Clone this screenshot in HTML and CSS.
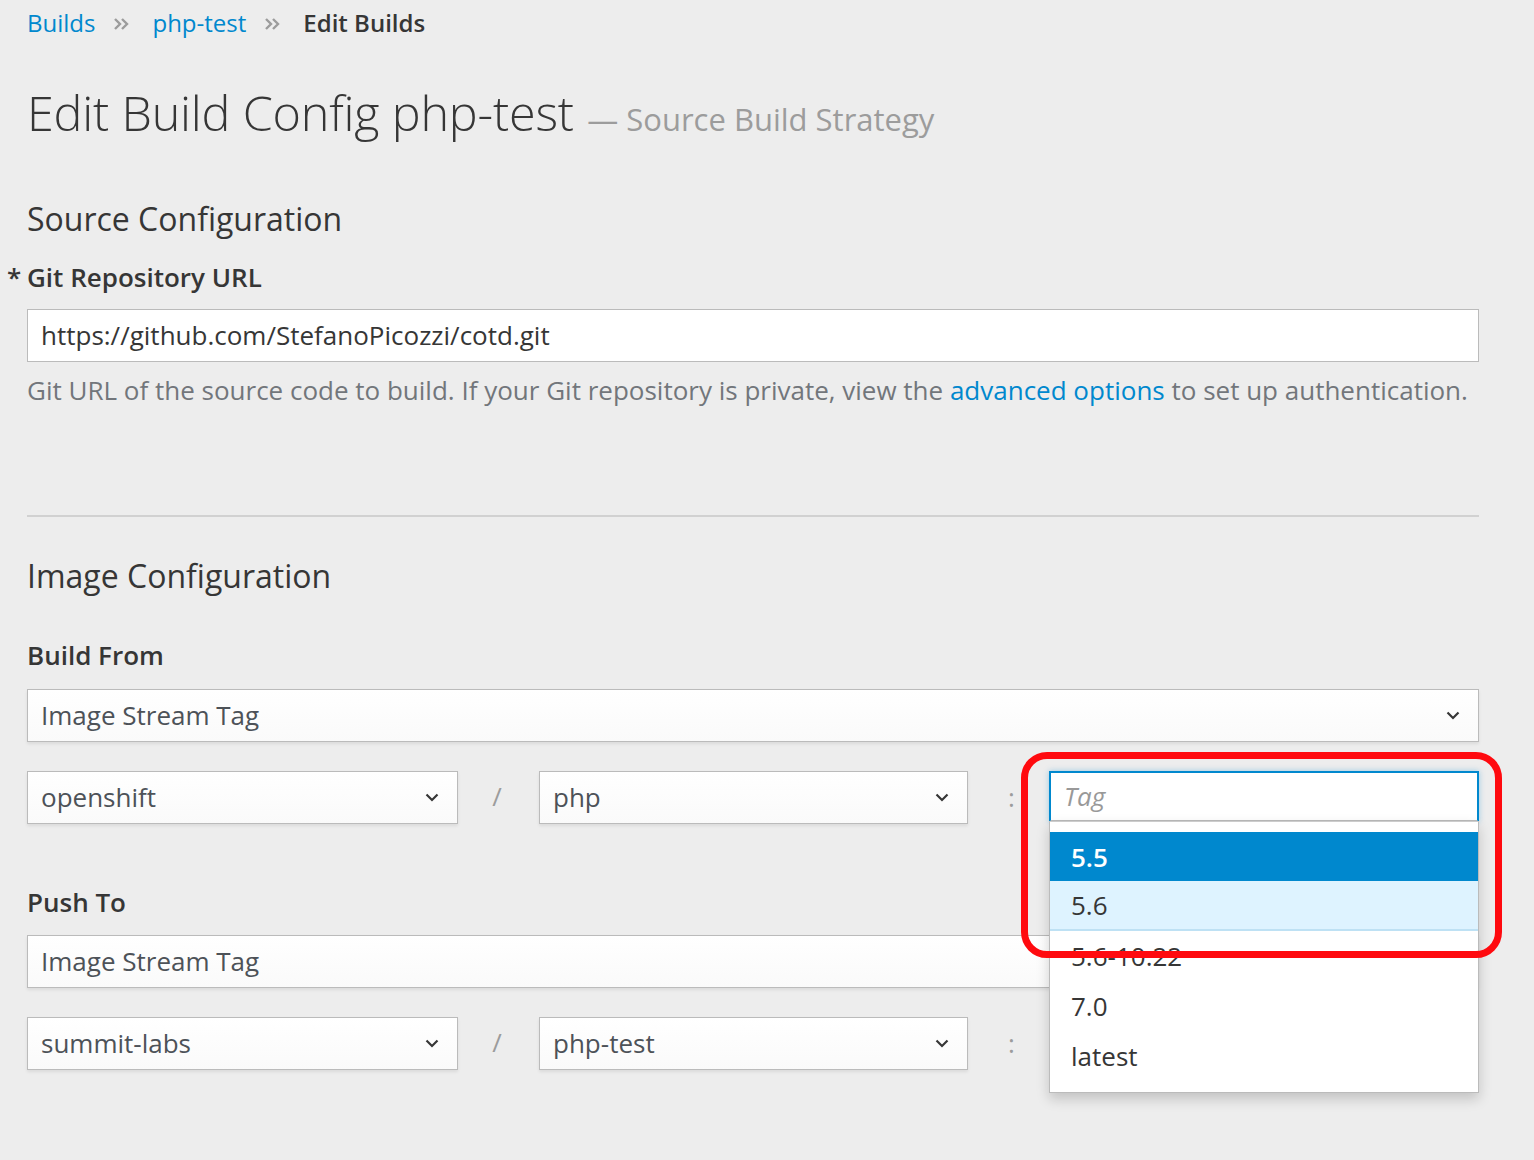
FILE: index.html
```html
<!DOCTYPE html>
<html lang="en">
<head>
<meta charset="utf-8">
<title>Edit Build Config php-test</title>
<link rel="stylesheet" href="styles.css">
</head>
<body>
<div class="page">
  <nav class="breadcrumb">
    <a href="#">Builds</a><span class="sep"><svg width="16" height="14" viewBox="0 0 16 14"><polyline points="2,2 7,7 2,12" fill="none" stroke="#9c9c9c" stroke-width="2.4"/><polyline points="9,2 14,7 9,12" fill="none" stroke="#9c9c9c" stroke-width="2.4"/></svg></span><a href="#">php-test</a><span class="sep"><svg width="16" height="14" viewBox="0 0 16 14"><polyline points="2,2 7,7 2,12" fill="none" stroke="#9c9c9c" stroke-width="2.4"/><polyline points="9,2 14,7 9,12" fill="none" stroke="#9c9c9c" stroke-width="2.4"/></svg></span><strong>Edit Builds</strong>
  </nav>

  <h1 class="title">Edit Build Config php-test <small>&mdash; Source Build Strategy</small></h1>

  <section class="section">
    <h2 class="section-title">Source Configuration</h2>
    <label class="label required"><span class="star">*</span>Git Repository URL</label>
    <div class="input">https://github.com/StefanoPicozzi/cotd.git</div>
    <p class="help">Git URL of the source code to build. If your Git repository is private, view the <a href="#">advanced options</a> to set up authentication.</p>
  </section>

  <hr class="divider">

  <section class="section">
    <h2 class="section-title img-title">Image Configuration</h2>

    <label class="label build-label">Build From</label>
    <div class="select"><span>Image Stream Tag</span><svg class="chev" width="14" height="9" viewBox="0 0 14 9"><polyline points="1.5,1.5 7,7 12.5,1.5" fill="none" stroke="#363636" stroke-width="2.2"/></svg></div>

    <div class="tag-row">
      <div class="select"><span>openshift</span><svg class="chev" width="14" height="9" viewBox="0 0 14 9"><polyline points="1.5,1.5 7,7 12.5,1.5" fill="none" stroke="#363636" stroke-width="2.2"/></svg></div>
      <div class="delim">/</div>
      <div class="select"><span>php</span><svg class="chev" width="14" height="9" viewBox="0 0 14 9"><polyline points="1.5,1.5 7,7 12.5,1.5" fill="none" stroke="#363636" stroke-width="2.2"/></svg></div>
      <div class="delim colon">:</div>
      <div class="tag-cell">
        <div class="input tag-input"><span class="placeholder">Tag</span></div>
        <ul class="menu">
          <li class="active">5.5</li>
          <li class="hover">5.6</li>
          <li>5.6-10.22</li>
          <li>7.0</li>
          <li>latest</li>
        </ul>
      </div>
    </div>

    <label class="label push-label">Push To</label>
    <div class="select"><span>Image Stream Tag</span><svg class="chev" width="14" height="9" viewBox="0 0 14 9"><polyline points="1.5,1.5 7,7 12.5,1.5" fill="none" stroke="#363636" stroke-width="2.2"/></svg></div>

    <div class="tag-row">
      <div class="select"><span>summit-labs</span><svg class="chev" width="14" height="9" viewBox="0 0 14 9"><polyline points="1.5,1.5 7,7 12.5,1.5" fill="none" stroke="#363636" stroke-width="2.2"/></svg></div>
      <div class="delim">/</div>
      <div class="select"><span>php-test</span><svg class="chev" width="14" height="9" viewBox="0 0 14 9"><polyline points="1.5,1.5 7,7 12.5,1.5" fill="none" stroke="#363636" stroke-width="2.2"/></svg></div>
      <div class="delim colon">:</div>
      <div class="tag-cell"></div>
    </div>
  </section>

  <div class="annotation"></div>
</div>
</body>
</html>
```

FILE: styles.css
```css
* { box-sizing: border-box; }
html, body { margin: 0; padding: 0; }
body {
  background: #ededed;
  font-family: "Open Sans", "Noto Sans", sans-serif;
  color: #363636;
  width: 1534px;
  height: 1160px;
  overflow: hidden;
}
a { color: #0088ce; text-decoration: none; }

.page {
  position: relative;
  padding: 0 55px 0 27px;
  width: 1534px;
}

.breadcrumb {
  font-size: 24px;
  line-height: 24px;
  padding-top: 11px;
  height: 35px;
  display: flex;
  align-items: center;
}
.breadcrumb .sep {
  display: inline-flex;
  align-items: center;
  margin: 0 23px 0 18px;
  height: 24px;
  padding-top: 2px;
}
.breadcrumb strong { font-weight: 600; color: #363636; }

.title {
  margin: 0;
  padding-top: 47px;
  font-size: 48.5px;
  line-height: 60px;
  font-weight: 300;
  color: #363636;
  letter-spacing: -0.2px;
}
.title small {
  font-size: 31px;
  color: #9c9c9c;
  font-weight: 400;
  margin-left: 1px;
  letter-spacing: 0;
}

.section-title {
  margin: 0;
  font-size: 32px;
  font-weight: 400;
  line-height: 40px;
  margin-top: 50px;
}
.label {
  display: block;
  font-weight: 600;
  font-size: 26px;
  line-height: 30px;
  margin-top: 23px;
  margin-bottom: 17px;
}
.label.required { margin-left: -20px; }
.star { display: inline-block; width: 20px; }

.input {
  height: 53px;
  border: 1px solid #bbbbbb;
  background: #fff;
  font-size: 26px;
  line-height: 51px;
  padding: 0 13px;
  color: #363636;
  width: 100%;
}
.help {
  margin: 11px 0 0;
  font-size: 26px;
  line-height: 34px;
  color: #72767b;
}

.divider {
  margin: 108px 0 0;
  border: 0;
  border-top: 2px solid #d1d1d1;
  width: 1452px;
}
.img-title { margin-top: 39px; }
.build-label { margin-top: 44px; margin-bottom: 19px; }

.select {
  height: 53px;
  border: 1px solid #bbbbbb;
  background: linear-gradient(to bottom, #ffffff 0%, #fafafa 100%);
  box-shadow: 0 2px 3px rgba(0, 0, 0, 0.08);
  font-size: 26px;
  line-height: 51px;
  padding: 0 18px 0 13px;
  color: #4d5258;
  display: flex;
  align-items: center;
  justify-content: space-between;
}
.chev { flex: none; }

.tag-row {
  display: grid;
  grid-template-columns: 431px 81px 429px 81px 430px;
  margin-top: 29px;
  height: 53px;
}
.delim {
  text-align: center;
  color: #9c9c9c;
  font-size: 26px;
  line-height: 50px;
  padding-right: 3px;
}
.colon { padding-right: 0; padding-left: 6px; line-height: 52px; }

.tag-cell { position: relative; }
.tag-input {
  border: 2px solid #0088ce;
  border-bottom-color: #bbb;
  box-shadow: 0 0 6px rgba(0, 136, 206, 0.35);
  height: 51px;
  line-height: 47px;
  padding-left: 13px;
}
.placeholder { font-style: italic; color: #999; }

.menu {
  position: absolute;
  left: 0;
  right: 0;
  top: 50px;
  margin: 0;
  padding: 10px 0 11px;
  list-style: none;
  background: #fff;
  border: 1px solid #bbbbbb;
  border-top-color: #cccccc;
  box-shadow: 0 6px 12px rgba(0, 0, 0, 0.18);
  z-index: 2;
}
.menu li {
  height: 50px;
  line-height: 50px;
  padding-left: 21px;
  font-size: 26px;
  color: #363636;
}
.menu li.active {
  background: #0088ce;
  color: #fff;
  font-weight: 600;
  height: 50px;
  border-bottom: 1px solid #def3ff;
}
.menu li.hover {
  background: #def3ff;
  border-bottom: 2px solid #bee1f4;
  height: 49px;
  line-height: 47px;
  color: #363636;
}

.push-label { margin-top: 63px; margin-bottom: 18px; }

.annotation {
  position: absolute;
  left: 1021px;
  top: 752px;
  width: 481px;
  height: 206px;
  border: 7px solid #ff0a0f;
  border-radius: 26px;
  z-index: 3;
  pointer-events: none;
}
```
